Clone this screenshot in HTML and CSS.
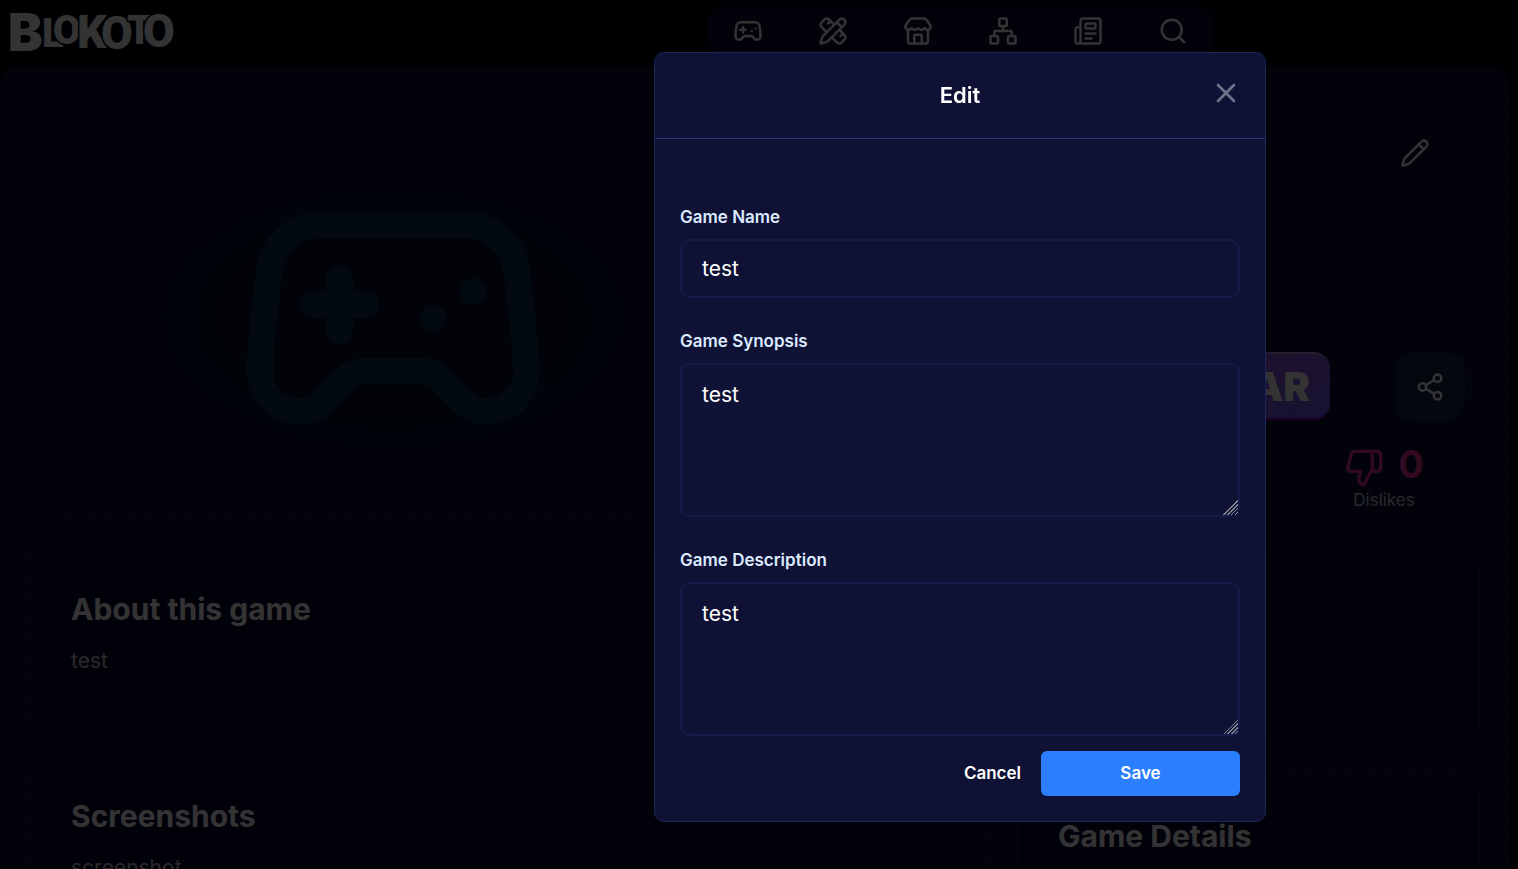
FILE: index.html
```html
<!DOCTYPE html>
<html lang="en">
<head>
  <meta charset="UTF-8" />
  <meta name="viewport" content="width=device-width, initial-scale=1" />
  <title>Blokoto</title>
  <link rel="stylesheet" href="styles.css">
</head>
<body>
  <header class="header">
    <a href="#" class="logo" aria-label="Blokoto">
      <svg width="168" height="46" viewBox="0 0 168 46">
        <text><tspan class="logo-big" x="-2" y="42">B</tspan><tspan class="logo-small" x="32" y="38">L</tspan><tspan class="logo-small" x="43" y="35">O</tspan><tspan class="logo-mid" x="67" y="39">K</tspan><tspan class="logo-mid" x="91" y="40">O</tspan><tspan class="logo-small" x="117" y="35">T</tspan><tspan class="logo-mid" x="133" y="38">O</tspan></text>
      </svg>
    </a>
    <nav class="nav">
      <a href="#" aria-label="Games">
        <svg class="icon" viewBox="0 0 24 24"><path d="M6 11h4M8 9v4M15 12h.01M18 10h.01" /><path d="M17.32 5H6.68a4 4 0 0 0-3.978 3.59c-.006.052-.01.101-.017.152C2.604 9.416 2 14.456 2 16a3 3 0 0 0 3 3c1 0 1.5-.5 2-1l1.414-1.414A2 2 0 0 1 9.828 16h4.344a2 2 0 0 1 1.414.586L17 18c.5.5 1 1 2 1a3 3 0 0 0 3-3c0-1.545-.604-6.584-.685-7.258-.007-.05-.011-.1-.017-.151A4 4 0 0 0 17.32 5z" /></svg>
      </a>
      <a href="#" aria-label="Create">
        <svg class="icon" viewBox="0 0 24 24"><path d="M13 7 8.7 2.7a2.41 2.41 0 0 0-3.4 0L2.7 5.3a2.41 2.41 0 0 0 0 3.4L7 13M8 6l2-2M18 16l2-2M17 11l4.3 4.3c.94.94.94 2.46 0 3.4l-2.6 2.6c-.94.94-2.46.94-3.4 0L11 17" /><path d="M21.174 6.812a1 1 0 0 0-3.986-3.987L3.842 16.174a2 2 0 0 0-.5.83l-1.321 4.352a.5.5 0 0 0 .623.622l4.353-1.32a2 2 0 0 0 .83-.497zM15 5l4 4" /></svg>
      </a>
      <a href="#" aria-label="Store">
        <svg class="icon" viewBox="0 0 24 24"><path d="M15 22v-6a1 1 0 0 0-1-1h-4a1 1 0 0 0-1 1v6" /><path d="M17.774 10.31a1.12 1.12 0 0 0-1.549 0 2.5 2.5 0 0 1-3.451 0 1.12 1.12 0 0 0-1.548 0 2.5 2.5 0 0 1-3.452 0 1.12 1.12 0 0 0-1.549 0 2.5 2.5 0 0 1-3.77-3.248l2.889-4.184A2 2 0 0 1 7 2h10a2 2 0 0 1 1.653.873l2.895 4.192a2.5 2.5 0 0 1-3.774 3.244" /><path d="M4 10.95V20a2 2 0 0 0 2 2h12a2 2 0 0 0 2-2v-9.05" /></svg>
      </a>
      <a href="#" aria-label="Network">
        <svg class="icon" viewBox="0 0 24 24"><rect x="16" y="16" width="6" height="6" rx="1" /><rect x="2" y="16" width="6" height="6" rx="1" /><rect x="9" y="2" width="6" height="6" rx="1" /><path d="M5 16v-3a1 1 0 0 1 1-1h12a1 1 0 0 1 1 1v3M12 12V8" /></svg>
      </a>
      <a href="#" aria-label="News">
        <svg class="icon" viewBox="0 0 24 24"><path d="M15 18h-5M18 14h-8M4 22h16a2 2 0 0 0 2-2V4a2 2 0 0 0-2-2H8a2 2 0 0 0-2 2v16a2 2 0 0 1-4 0v-9a2 2 0 0 1 2-2h2" /><rect x="10" y="6" width="8" height="4" rx="1" /></svg>
      </a>
      <a href="#" aria-label="Search">
        <svg class="icon" viewBox="0 0 24 24"><circle cx="11" cy="11" r="8" /><path d="m21 21-4.34-4.34" /></svg>
      </a>
    </nav>
  </header>

  <main class="panel">
    <section class="hero">
      <div class="thumb">
        <svg class="icon thumb-icon" viewBox="0 0 24 24"><path d="M6 11h4M8 9v4M15 12h.01M18 10h.01" /><path d="M17.32 5H6.68a4 4 0 0 0-3.978 3.59c-.006.052-.01.101-.017.152C2.604 9.416 2 14.456 2 16a3 3 0 0 0 3 3c1 0 1.5-.5 2-1l1.414-1.414A2 2 0 0 1 9.828 16h4.344a2 2 0 0 1 1.414.586L17 18c.5.5 1 1 2 1a3 3 0 0 0 3-3c0-1.545-.604-6.584-.685-7.258-.007-.05-.011-.1-.017-.151A4 4 0 0 0 17.32 5z" /></svg>
      </div>
      <div class="hero-side">
        <button class="edit-btn" aria-label="Edit game">
          <svg class="icon" viewBox="0 0 24 24"><path d="M21.174 6.812a1 1 0 0 0-3.986-3.987L3.842 16.174a2 2 0 0 0-.5.83l-1.321 4.352a.5.5 0 0 0 .623.622l4.353-1.32a2 2 0 0 0 .83-.497zM15 5l4 4" /></svg>
        </button>
        <div>
          <div class="actions">
            <button class="play-btn">JUGAR</button>
            <button class="share-btn" aria-label="Share">
              <svg class="icon" viewBox="0 0 24 24"><circle cx="18" cy="5" r="3" /><circle cx="6" cy="12" r="3" /><circle cx="18" cy="19" r="3" /><path d="m8.59 13.51 6.83 3.98M15.41 6.51l-6.82 3.98" /></svg>
            </button>
          </div>
          <div class="stat">
            <div class="stat-value">
              <svg class="icon" viewBox="0 0 24 24"><path d="M17 14V2M9 18.12 10 14H4.17a2 2 0 0 1-1.92-2.56l2.33-8A2 2 0 0 1 6.5 2H20a2 2 0 0 1 2 2v8a2 2 0 0 1-2 2h-2.76a2 2 0 0 0-1.79 1.11L12 22a3.13 3.13 0 0 1-3-3.88Z" /></svg>
              <span>0</span>
            </div>
            <span class="stat-label">Dislikes</span>
          </div>
        </div>
      </div>
    </section>

    <div class="columns">
      <div class="column">
        <section class="card">
          <h2>About this game</h2>
          <p>test</p>
        </section>
        <section class="card">
          <h2>Screenshots</h2>
          <p>screenshot</p>
        </section>
      </div>
      <div class="column">
        <section class="card card-author"></section>
        <section class="card">
          <h2>Game Details</h2>
        </section>
      </div>
    </div>
  </main>

  <div class="overlay">
    <div class="modal" role="dialog" aria-labelledby="modal-title">
      <div class="modal-header">
        <h3 id="modal-title">Edit</h3>
        <button class="close-btn" aria-label="Close">
          <svg class="icon" viewBox="0 0 24 24"><path d="M18 6 6 18M6 6l12 12" /></svg>
        </button>
      </div>
      <form class="modal-body">
        <div class="field">
          <label for="game-name">Game Name</label>
          <input type="text" id="game-name" value="test" />
        </div>
        <div class="field">
          <label for="game-synopsis">Game Synopsis</label>
          <textarea id="game-synopsis">test</textarea>
        </div>
        <div class="field">
          <label for="game-description">Game Description</label>
          <textarea id="game-description">test</textarea>
        </div>
        <div class="modal-footer">
          <button type="button" class="cancel-btn">Cancel</button>
          <button type="submit" class="save-btn">Save</button>
        </div>
      </form>
    </div>
  </div>
</body>
</html>
```
FILE: styles.css
```css
* {
  box-sizing: border-box;
}
body {
  margin: 0;
  height: 100vh;
  overflow: hidden;
  background: #000010;
  color: #fff;
  font-family: Inter, "Open Sans", sans-serif;
}
button {
  font-family: inherit;
  color: inherit;
  background: none;
  border: none;
  padding: 0;
  cursor: pointer;
}
h2, h3, p {
  margin: 0;
}
.icon {
  display: block;
  width: 30px;
  height: 30px;
  fill: none;
  stroke: currentColor;
  stroke-width: 2;
  stroke-linecap: round;
  stroke-linejoin: round;
}

/* header */
.header {
  position: relative;
  height: 67px;
  padding: 9px 10px;
}
.logo svg {
  display: block;
  overflow: visible;
}
.logo text {
  font-family: Roboto, sans-serif;
  font-weight: 900;
  fill: #fff;
  stroke: #000010;
  stroke-width: 3px;
  stroke-linejoin: round;
  paint-order: stroke;
}
.logo .logo-big {
  font-family: Inter, sans-serif;
  font-size: 52px;
}
.logo .logo-mid {
  font-size: 46px;
}
.logo .logo-small {
  font-size: 40px;
}
.nav {
  position: absolute;
  top: 7px;
  left: 708px;
  display: flex;
  gap: 55px;
  padding: 9px 25px;
  border-radius: 16px;
  background: #0a0a3a;
}
.nav a {
  color: #fff;
}

/* page panel */
.panel {
  margin-right: 8px;
  min-height: 900px;
  border-radius: 20px;
  background-color: #0a0a3a;
  background-image:
    linear-gradient(#141444 1px, transparent 1px),
    linear-gradient(90deg, #141444 1px, transparent 1px);
  background-size: 20px 20px;
  background-position: 10px 10px;
}
.hero {
  display: flex;
  justify-content: space-between;
  padding: 55px 45px 34px;
}
.thumb {
  display: flex;
  align-items: center;
  justify-content: center;
  width: 696px;
  height: 392px;
  border: 1px dashed #1e1e50;
  border-radius: 20px;
  background: radial-gradient(closest-side, #050f2d, #050f32 60%, #0a0a37);
}
.thumb-icon {
  width: 320px;
  height: 320px;
  color: #0a2d50;
}
.hero-side {
  display: flex;
  flex-direction: column;
  justify-content: space-between;
  align-items: flex-end;
}
.edit-btn {
  padding: 16px 35px;
}
.actions {
  display: flex;
  align-items: flex-start;
  gap: 65px;
}
.play-btn {
  height: 68px;
  padding: 0 20px;
  border-top: 2px solid #a898e0;
  border-bottom: 2px solid #9000c0;
  border-radius: 16px;
  background: linear-gradient(160deg, #a050e0, #8c55e6 50%, #6a5af5);
  font-size: 40px;
  font-weight: 900;
}
.share-btn {
  display: flex;
  align-items: center;
  justify-content: center;
  width: 70px;
  height: 70px;
  border-radius: 20px;
  background: #0f2346;
}
.stat {
  display: flex;
  flex-direction: column;
  align-items: center;
  width: 80px;
  margin: 26px 41px 2px auto;
}
.stat-value {
  display: flex;
  align-items: flex-start;
  gap: 14px;
  color: #f6339a;
  font-size: 38px;
  font-weight: 700;
  line-height: 32px;
}
.stat-value .icon {
  width: 40px;
  height: 40px;
}
.stat-label {
  color: #c8c8d0;
  font-size: 17px;
  line-height: 24px;
}
.columns {
  display: grid;
  grid-template-columns: minmax(0, 1fr) 463px;
  gap: 30px;
  padding: 0 30px;
}
.column {
  display: flex;
  flex-direction: column;
  gap: 31px;
}
.card {
  padding: 40px;
  border: 1px solid #1e1e50;
  border-radius: 16px;
  background: #080834;
}
.card-author {
  min-height: 196px;
}
.card h2 {
  font-size: 30px;
  line-height: 40px;
}
.card p {
  margin: 18px 0 8px;
  color: #c8c8d0;
  font-size: 21px;
  line-height: 28px;
}

/* edit modal */
.overlay {
  position: fixed;
  inset: 0;
  display: flex;
  justify-content: flex-end;
  align-items: flex-start;
  padding: 52px 252px 0 0;
  background: rgba(0, 0, 0, 0.8);
}
.modal {
  width: 100%;
  max-width: 612px;
  border: 1px solid #1c2658;
  border-radius: 10px;
  background: #0f1235;
}
.modal-header {
  position: relative;
  padding: 28px;
  border-bottom: 1px solid #263a7c;
  text-align: center;
}
.modal-header h3 {
  font-size: 22px;
  font-weight: 600;
  line-height: 29px;
}
.close-btn {
  position: absolute;
  top: 24px;
  right: 23px;
  color: #6f7388;
}
.close-btn .icon {
  width: 32px;
  height: 32px;
}
.modal-body {
  padding: 66px 25px 25px;
}
.field {
  display: flex;
  flex-direction: column;
  gap: 10px;
  margin-bottom: 31px;
}
.field label {
  color: #dbeafe;
  font-size: 17px;
  font-weight: 600;
  line-height: 24px;
}
.field input,
.field textarea {
  width: 100%;
  padding: 16px 20px;
  border: 2px solid #141b46;
  border-radius: 10px;
  outline: none;
  background: transparent;
  color: #fff;
  font-family: inherit;
  font-size: 21px;
  line-height: 28px;
}
.field input {
  height: 59px;
}
.field textarea {
  height: 154px;
  resize: vertical;
}
.field textarea::-webkit-scrollbar {
  width: 20px;
  height: 20px;
}
.field textarea::-webkit-resizer {
  background: linear-gradient(135deg, transparent 50%, #858794 50% 54%, transparent 54% 63%, #858794 63% 67%, transparent 67% 76%, #858794 76% 80%, transparent 80% 89%, #858794 89% 93%, transparent 93%);
}
.modal-footer {
  display: flex;
  justify-content: flex-end;
  gap: 20px;
  margin-top: -16px;
}
.cancel-btn,
.save-btn {
  font-size: 17px;
  font-weight: 600;
  line-height: 45px;
}
.save-btn {
  width: 199px;
  border-radius: 6px;
  background: #2b7fff;
}
```
